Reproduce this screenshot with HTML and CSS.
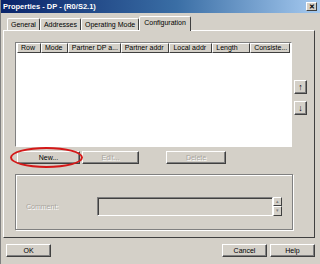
FILE: index.html
```html
<!DOCTYPE html>
<html lang="en">

<head>
    <meta charset="UTF-8">
    <title>Properties - DP - (R0/S2.1)</title>
    <link rel="stylesheet" href="styles.css">
</head>

<body>
    <div class="window">
        <div class="titlebar">
            <span class="title">Properties - DP - (R0/S2.1)</span>
            <span class="close-btn">&#x2715;</span>
        </div>

        <div class="tabs">
            <div class="tab">General</div>
            <div class="tab">Addresses</div>
            <div class="tab">Operating Mode</div>
            <div class="tab active">Configuration</div>
        </div>

        <div class="panel">
            <div class="list-row">
                <div class="listview">
                    <div class="list-header">
                        <div class="col col-row">Row</div>
                        <div class="col col-mode">Mode</div>
                        <div class="col col-pdp">Partner DP a...</div>
                        <div class="col col-paddr">Partner addr</div>
                        <div class="col col-laddr">Local addr</div>
                        <div class="col col-len">Length</div>
                        <div class="col col-cons">Consiste...</div>
                    </div>
                </div>
                <div class="side-buttons">
                    <div class="btn arrow-btn up">&#x2191;</div>
                    <div class="btn arrow-btn down">&#x2193;</div>
                </div>
            </div>

            <div class="action-row">
                <div class="btn btn-new">New...</div>
                <div class="btn btn-edit disabled">Edit...</div>
                <div class="btn btn-delete disabled">Delete</div>
                <!-- annotation ring drawn on top of the screenshot -->
                <div class="highlight-ring"></div>
            </div>

            <div class="groupbox">
                <span class="label disabled-text">Comment:</span>
                <div class="comment-field">
                    <div class="comment-input"></div>
                    <div class="spin">
                        <div class="spin-btn">&#x25B4;</div>
                        <div class="spin-btn">&#x25BE;</div>
                    </div>
                </div>
            </div>
        </div>

        <div class="footer">
            <div class="btn btn-ok">OK</div>
            <div class="footer-right">
                <div class="btn btn-cancel">Cancel</div>
                <div class="btn btn-help">Help</div>
            </div>
        </div>
    </div>
</body>

</html>
```

FILE: styles.css
```css
:root {
    --face: #d4d0c8;
    --shadow: #808080;
    --dark: #404040;
    --light: #ffffff;
}

body {
    margin: 0;
    padding: 0;
    background-color: var(--face);
    font-family: "Liberation Sans", Arial, sans-serif;
    font-size: 7px;
    color: #000;
}

.window {
    width: 320px;
    height: 264px;
    background-color: var(--face);
    box-sizing: border-box;
    border-left: 1px solid var(--shadow);
    position: relative;
    overflow: hidden;
}

.titlebar {
    height: 13px;
    background: linear-gradient(to right, #0a246a 0%, #3a6ea5 55%, #a6caf0 100%);
    display: flex;
    align-items: center;
    justify-content: space-between;
    padding: 0 3px 0 2px;
}

.title {
    color: white;
    font-weight: bold;
    font-size: 7.5px;
}

.close-btn {
    width: 11px;
    height: 9px;
    background-color: var(--face);
    border: 1px solid;
    border-color: var(--light) var(--dark) var(--dark) var(--light);
    box-sizing: border-box;
    font-size: 7px;
    font-weight: bold;
    line-height: 7px;
    text-align: center;
}

.tabs {
    display: flex;
    align-items: flex-end;
    margin: 3px 0 0 6px;
    height: 14px;
}

.tab {
    height: 12px;
    padding: 0 3px;
    box-sizing: border-box;
    border: 1px solid;
    border-bottom: none;
    border-color: var(--light) var(--dark) transparent var(--light);
    border-radius: 2px 2px 0 0;
    line-height: 11px;
}

.tab.active {
    height: 15px;
    margin-bottom: -1px;
    padding: 0 4px;
    background-color: var(--face);
    position: relative;
    z-index: 1;
}

.panel {
    margin-left: 2px;
    width: 312px;
    height: 208px;
    box-sizing: border-box;
    border: 1px solid;
    border-color: var(--light) var(--dark) var(--dark) var(--light);
    padding: 11px 0 0 11px;
}

.list-row {
    display: flex;
}

.listview {
    width: 277px;
    height: 105px;
    box-sizing: border-box;
    background: white;
    border: 1px solid;
    border-color: var(--shadow) var(--light) var(--light) var(--shadow);
    padding: 0 1px;
}

.list-header {
    display: flex;
    height: 10px;
}

.col {
    box-sizing: border-box;
    height: 10px;
    background-color: var(--face);
    border: 1px solid;
    border-color: var(--light) var(--dark) var(--dark) var(--light);
    padding-left: 3px;
    line-height: 8px;
    white-space: nowrap;
    overflow: hidden;
}

.col-row { width: 24px; }
.col-mode { width: 27px; }
.col-pdp { width: 53px; }
.col-paddr { width: 49px; }
.col-laddr { width: 43px; }
.col-len { width: 38px; }
.col-cons { width: 40px; }

.side-buttons {
    display: flex;
    flex-direction: column;
    gap: 7px;
    margin: 38px 0 0 2px;
}

.btn {
    box-sizing: border-box;
    height: 13px;
    background-color: var(--face);
    border: 1px solid;
    border-color: var(--light) var(--dark) var(--dark) var(--light);
    box-shadow: inset -1px -1px 0 var(--shadow);
    text-align: center;
    line-height: 11px;
}

.arrow-btn {
    width: 13px;
    height: 14px;
    font-weight: bold;
    font-size: 9px;
    line-height: 12px;
}

.action-row {
    display: flex;
    margin: 4px 0 0 2px;
    position: relative;
}

.btn-new { width: 63px; }
.btn-edit { width: 57px; margin-left: 2px; }
.btn-delete { width: 60px; margin-left: 27px; }

.disabled,
.disabled-text {
    color: #a8a59e;
    text-shadow: 1px 1px 0 #fff;
}

.highlight-ring {
    position: absolute;
    left: -7px;
    top: -4px;
    width: 73px;
    height: 21px;
    border: 2px solid #d41818;
    border-radius: 50%;
    box-sizing: border-box;
}

.groupbox {
    margin-top: 10px;
    width: 278px;
    height: 56px;
    box-sizing: border-box;
    border: 1px solid var(--shadow);
    box-shadow: 1px 1px 0 var(--light), inset 1px 1px 0 var(--light);
    display: flex;
    align-items: center;
    padding: 8px 0 0 10px;
}

.label {
    width: 71px;
}

.comment-field {
    display: flex;
}

.comment-input {
    width: 176px;
    height: 19px;
    box-sizing: border-box;
    border: 1px solid;
    border-color: var(--shadow) var(--light) var(--light) var(--shadow);
    box-shadow: inset 1px 1px 0 var(--dark);
}

.spin {
    display: flex;
    flex-direction: column;
}

.spin-btn {
    width: 9px;
    height: 9.5px;
    box-sizing: border-box;
    border: 1px solid;
    border-color: var(--light) var(--dark) var(--dark) var(--light);
    font-size: 5px;
    line-height: 7px;
    text-align: center;
    color: var(--shadow);
}

.footer {
    display: flex;
    justify-content: space-between;
    margin: 6px 0 0 5px;
    width: 309px;
}

.footer-right {
    display: flex;
    gap: 3px;
}

.btn-ok,
.btn-cancel,
.btn-help {
    width: 45px;
}
```
